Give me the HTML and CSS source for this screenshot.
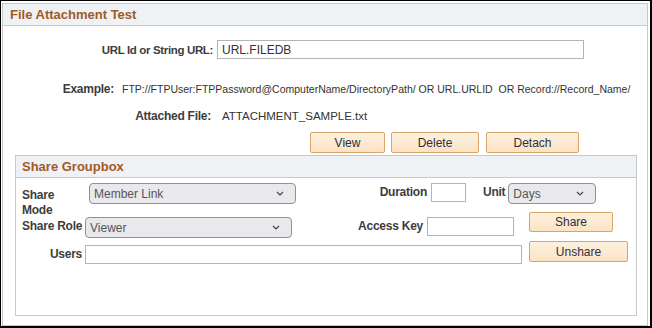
FILE: index.html
```html
<!DOCTYPE html>
<html lang="en">
<head>
    <meta charset="UTF-8">
    <meta name="viewport" content="width=device-width, initial-scale=1.0">
    <title>File Attachment Test</title>
    <link rel="stylesheet" href="styles.css">
</head>
<body>
    <div class="frame">
        <div class="panel">
            <div class="panel-head">File Attachment Test</div>
            <div class="panel-body">
                <div class="row row-url">
                    <label class="lbl lbl-url" for="url">URL Id or String URL:</label>
                    <input type="text" id="url" class="txt txt-url" value="URL.FILEDB">
                </div>
                <div class="row row-example">
                    <span class="lbl lbl-example">Example:</span>
                    <span class="val val-small">FTP://FTPUser:FTPPassword@ComputerName/DirectoryPath/ OR URL.URLID&nbsp; OR Record://Record_Name/</span>
                </div>
                <div class="row row-file">
                    <span class="lbl lbl-file">Attached File:</span>
                    <span class="val">ATTACHMENT_SAMPLE.txt</span>
                </div>
                <div class="row row-actions">
                    <button class="btn btn-view">View</button>
                    <button class="btn btn-delete">Delete</button>
                    <button class="btn btn-detach">Detach</button>
                </div>

                <div class="group">
                    <div class="group-head">Share Groupbox</div>
                    <div class="group-body">
                        <div class="srow srow-mode">
                            <label class="lbl lbl-mode" for="mode">Share Mode</label>
                            <span class="pick pick-mode">
                                <select id="mode" class="sel">
                                    <option>Member Link</option>
                                </select>
                                <svg class="chev" width="8" height="5" viewBox="0 0 8 5"><path d="M1 1 L4 4 L7 1" fill="none" stroke="#444" stroke-width="1.2"/></svg>
                            </span>
                            <label class="lbl lbl-duration" for="duration">Duration</label>
                            <input type="text" id="duration" class="txt txt-duration">
                            <label class="lbl lbl-unit" for="unit">Unit</label>
                            <span class="pick pick-unit">
                                <select id="unit" class="sel">
                                    <option>Days</option>
                                </select>
                                <svg class="chev" width="8" height="5" viewBox="0 0 8 5"><path d="M1 1 L4 4 L7 1" fill="none" stroke="#444" stroke-width="1.2"/></svg>
                            </span>
                        </div>
                        <div class="srow srow-role">
                            <label class="lbl lbl-side" for="role">Share Role</label>
                            <span class="pick pick-role">
                                <select id="role" class="sel">
                                    <option>Viewer</option>
                                </select>
                                <svg class="chev" width="8" height="5" viewBox="0 0 8 5"><path d="M1 1 L4 4 L7 1" fill="none" stroke="#444" stroke-width="1.2"/></svg>
                            </span>
                            <label class="lbl lbl-key" for="key">Access Key</label>
                            <input type="text" id="key" class="txt txt-key">
                            <button class="btn btn-share">Share</button>
                        </div>
                        <div class="srow srow-users">
                            <label class="lbl lbl-side lbl-users" for="users">Users</label>
                            <input type="text" id="users" class="txt txt-users">
                            <button class="btn btn-unshare">Unshare</button>
                        </div>
                    </div>
                </div>
            </div>
        </div>
    </div>
</body>
</html>
```

FILE: styles.css
```css
body {
    margin: 0;
    font-family: "Liberation Sans", Arial, sans-serif;
    font-size: 12px;
    color: #333;
    background: #fff;
}
.frame {
    width: 652px;
    height: 328px;
    box-sizing: border-box;
    border: solid #000;
    border-width: 1px 2px 2px 1px;
    padding: 2px 0 0 1px;
}
.panel {
    width: 646px;
    height: 323px;
    box-sizing: border-box;
    border: 1px solid #c9c9c9;
}
.panel-head,
.group-head {
    height: 21px;
    line-height: 21px;
    background: #eff2f4;
    border-bottom: 1px solid #c5cbd0;
    color: #a05a26;
    font-weight: bold;
    font-size: 13px;
}
.panel-head {
    padding-left: 7px;
}
.row {
    display: flex;
    align-items: center;
}
.lbl {
    font-weight: bold;
    color: #3d3d3d;
    white-space: nowrap;
    letter-spacing: -0.25px;
}
.val {
    color: #333;
    font-size: 11.5px;
}
.val-small {
    font-size: 10.5px;
}
.txt {
    height: 19px;
    box-sizing: border-box;
    border: 1px solid #b4b4b4;
    margin: 0;
    padding: 0 4px;
    font-family: inherit;
    font-size: 12px;
    color: #333;
    outline: none;
}
.row-url {
    margin-top: 14px;
    height: 19px;
}
.lbl-url {
    width: 210px;
    text-align: right;
    margin-right: 4px;
    font-size: 11.5px;
    letter-spacing: -0.35px;
}
.txt-url {
    width: 367px;
}
.row-example {
    margin-top: 23px;
    height: 14px;
}
.lbl-example {
    width: 111px;
    text-align: right;
    margin-right: 8px;
}
.row-file {
    margin-top: 13px;
    height: 14px;
}
.lbl-file {
    width: 208px;
    text-align: right;
    margin-right: 11px;
}
.row-actions {
    margin-top: 9px;
    padding-left: 307px;
}
.btn {
    height: 21px;
    box-sizing: border-box;
    margin: 0;
    padding: 0;
    border: 1px solid #daa46c;
    border-radius: 2px;
    background: linear-gradient(#fdf1df, #fbe3c4);
    font-family: inherit;
    font-size: 12px;
    color: #2f2f3a;
    cursor: pointer;
}
.btn-view {
    width: 75px;
}
.btn-delete {
    width: 88px;
    margin-left: 6px;
}
.btn-detach {
    width: 93px;
    margin-left: 7px;
}
.group {
    margin: 2px 0 0 12px;
    width: 622px;
    height: 161px;
    box-sizing: border-box;
    border: 1px solid #c9c9c9;
}
.group-head {
    padding-left: 6px;
}
.srow {
    display: flex;
    align-items: flex-start;
    padding-left: 6px;
    height: 29px;
}
.srow-mode {
    margin-top: 5px;
}
.pick {
    position: relative;
    display: block;
}
.sel {
    appearance: none;
    -webkit-appearance: none;
    display: block;
    height: 21px;
    width: 100%;
    box-sizing: border-box;
    margin: 0;
    padding: 0 4px;
    border: 1px solid #8f8f9d;
    border-radius: 4px;
    background: #e9e9ed;
    font-family: inherit;
    font-size: 12px;
    color: #555;
}
.chev {
    position: absolute;
    right: 12px;
    top: 8px;
}
.lbl-mode {
    width: 62px;
    line-height: 15px;
    margin-top: 5px;
    white-space: normal;
}
.pick-mode {
    width: 207px;
    margin-left: 5px;
}
.lbl-duration {
    width: 131px;
    text-align: right;
    line-height: 19px;
    margin-right: 4px;
}
.txt-duration {
    width: 35px;
}
.lbl-unit {
    margin-left: 17px;
    margin-right: 3px;
    line-height: 19px;
}
.pick-unit {
    width: 88px;
}
.lbl-side {
    width: 62px;
    margin-right: 1px;
    line-height: 19px;
    margin-top: 5px;
    text-align: left;
}
.lbl-users {
    text-align: right;
    margin-top: 4px;
    padding-right: 2px;
    box-sizing: border-box;
}
.pick-role {
    width: 207px;
    margin-top: 5px;
}
.lbl-key {
    width: 131px;
    text-align: right;
    line-height: 19px;
    margin: 5px 4px 0 0;
}
.txt-key {
    width: 87px;
    margin-top: 5px;
}
.btn-share {
    width: 84px;
    height: 20px;
    margin-left: 15px;
}
.txt-users {
    width: 437px;
    margin-top: 4px;
}
.btn-unshare {
    width: 99px;
    margin-left: 7px;
}
```
